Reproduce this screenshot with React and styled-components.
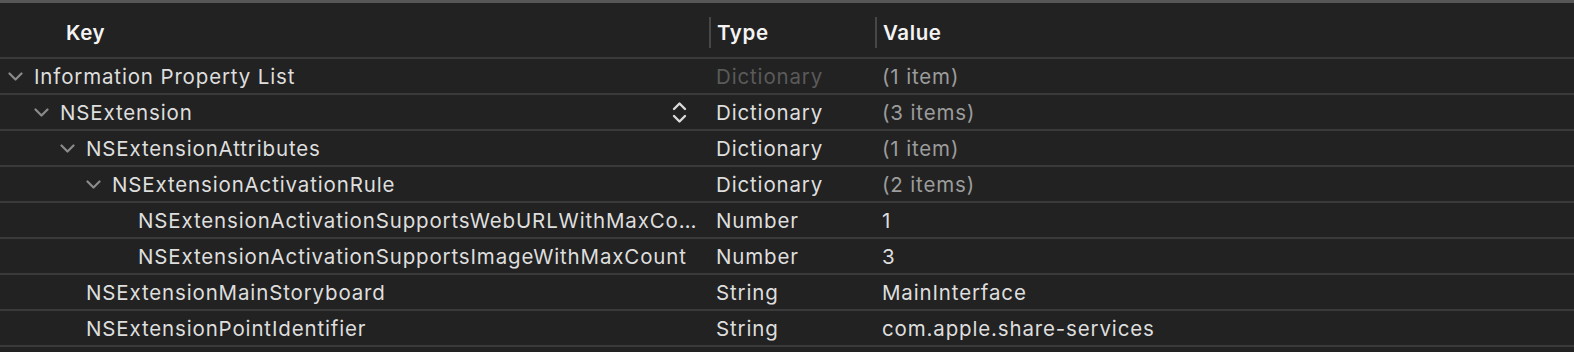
import React from 'react';
import styled, { createGlobalStyle } from 'styled-components';

const GlobalStyle = createGlobalStyle`
  html, body {
    margin: 0;
    padding: 0;
    background: #222222;
  }
  body {
    font-family: Inter, "Noto Sans", "Liberation Sans", sans-serif;
    -webkit-font-smoothing: antialiased;
  }
`;

const Table = styled.div`
  width: 1574px;
  height: 352px;
  background: #222222;
  border-top: 3px solid #575757;
  box-sizing: border-box;
  display: flex;
  flex-direction: column;
  overflow: hidden;
`;

const Row = styled.div`
  display: grid;
  grid-template-columns: 709px 166px 1fr;
  height: ${props => props.$header ? '54px' : '34px'};
  border-bottom: 2px solid #3a3a3a;
  flex-shrink: 0;
`;

const HeaderCell = styled.div`
  display: flex;
  align-items: center;
  padding-top: 4px;
  padding-left: ${props => props.$pad || 0}px;
  color: #f4f4f4;
  font-size: 20.5px;
  font-weight: 600;
  letter-spacing: 0.6px;
`;

const Divider = styled.span`
  width: 2px;
  height: 31px;
  background: #474747;
  margin-right: 6px;
`;

const KeyCell = styled.div`
  display: flex;
  align-items: center;
  min-width: 0;
  padding-left: ${props => 8 + props.$level * 26}px;
  padding-right: 12px;
`;

const Disclosure = styled.span`
  width: 26px;
  flex-shrink: 0;
  display: flex;
  align-items: center;
`;

const Text = styled.span`
  font-size: 20.5px;
  color: ${props => props.$dim ? '#5a5a5a' : props.$muted ? '#9c9c9c' : '#dedede'};
  white-space: nowrap;
  overflow: hidden;
  text-overflow: ellipsis;
  letter-spacing: 0.85px;
`;

const Cell = styled.div`
  display: flex;
  align-items: center;
  padding-left: 7px;
  min-width: 0;
`;

const Stepper = styled.span`
  margin-left: auto;
  margin-right: 10px;
  display: flex;
  flex-shrink: 0;
`;

const Chevron = () => (
  <svg width="15" height="9" viewBox="0 0 15 9">
    <path d="M1.5 1.5 L7.5 7.5 L13.5 1.5" fill="none" stroke="#8b8b8b" strokeWidth="2.2" strokeLinecap="round" strokeLinejoin="round" />
  </svg>
);

const UpDown = () => (
  <svg width="15" height="23" viewBox="0 0 15 23">
    <path d="M2 8 L7.5 2.5 L13 8" fill="none" stroke="#dadada" strokeWidth="2.4" strokeLinecap="round" strokeLinejoin="round" />
    <path d="M2 15 L7.5 20.5 L13 15" fill="none" stroke="#dadada" strokeWidth="2.4" strokeLinecap="round" strokeLinejoin="round" />
  </svg>
);

const rows = [
  { key: 'Information Property List', level: 0, open: true, type: 'Dictionary', typeDim: true, value: '(1 item)', muted: true },
  { key: 'NSExtension', level: 1, open: true, type: 'Dictionary', value: '(3 items)', muted: true, stepper: true },
  { key: 'NSExtensionAttributes', level: 2, open: true, type: 'Dictionary', value: '(1 item)', muted: true },
  { key: 'NSExtensionActivationRule', level: 3, open: true, type: 'Dictionary', value: '(2 items)', muted: true },
  { key: 'NSExtensionActivationSupportsWebURLWithMaxCount', level: 4, type: 'Number', value: '1' },
  { key: 'NSExtensionActivationSupportsImageWithMaxCount', level: 4, type: 'Number', value: '3' },
  { key: 'NSExtensionMainStoryboard', level: 2, type: 'String', value: 'MainInterface' },
  { key: 'NSExtensionPointIdentifier', level: 2, type: 'String', value: 'com.apple.share-services' },
];

export default function App() {
  return (
    <>
      <GlobalStyle />
      <Table>
        <Row $header>
          <HeaderCell $pad={66}>Key</HeaderCell>
          <HeaderCell><Divider />Type</HeaderCell>
          <HeaderCell><Divider />Value</HeaderCell>
        </Row>
        {rows.map(row => (
          <Row key={row.key}>
            <KeyCell $level={row.level}>
              <Disclosure>{row.open && <Chevron />}</Disclosure>
              <Text>{row.key}</Text>
              {row.stepper && <Stepper><UpDown /></Stepper>}
            </KeyCell>
            <Cell>
              <Text $dim={row.typeDim}>{row.type}</Text>
            </Cell>
            <Cell>
              <Text $muted={row.muted}>{row.value}</Text>
            </Cell>
          </Row>
        ))}
      </Table>
    </>
  );
}
